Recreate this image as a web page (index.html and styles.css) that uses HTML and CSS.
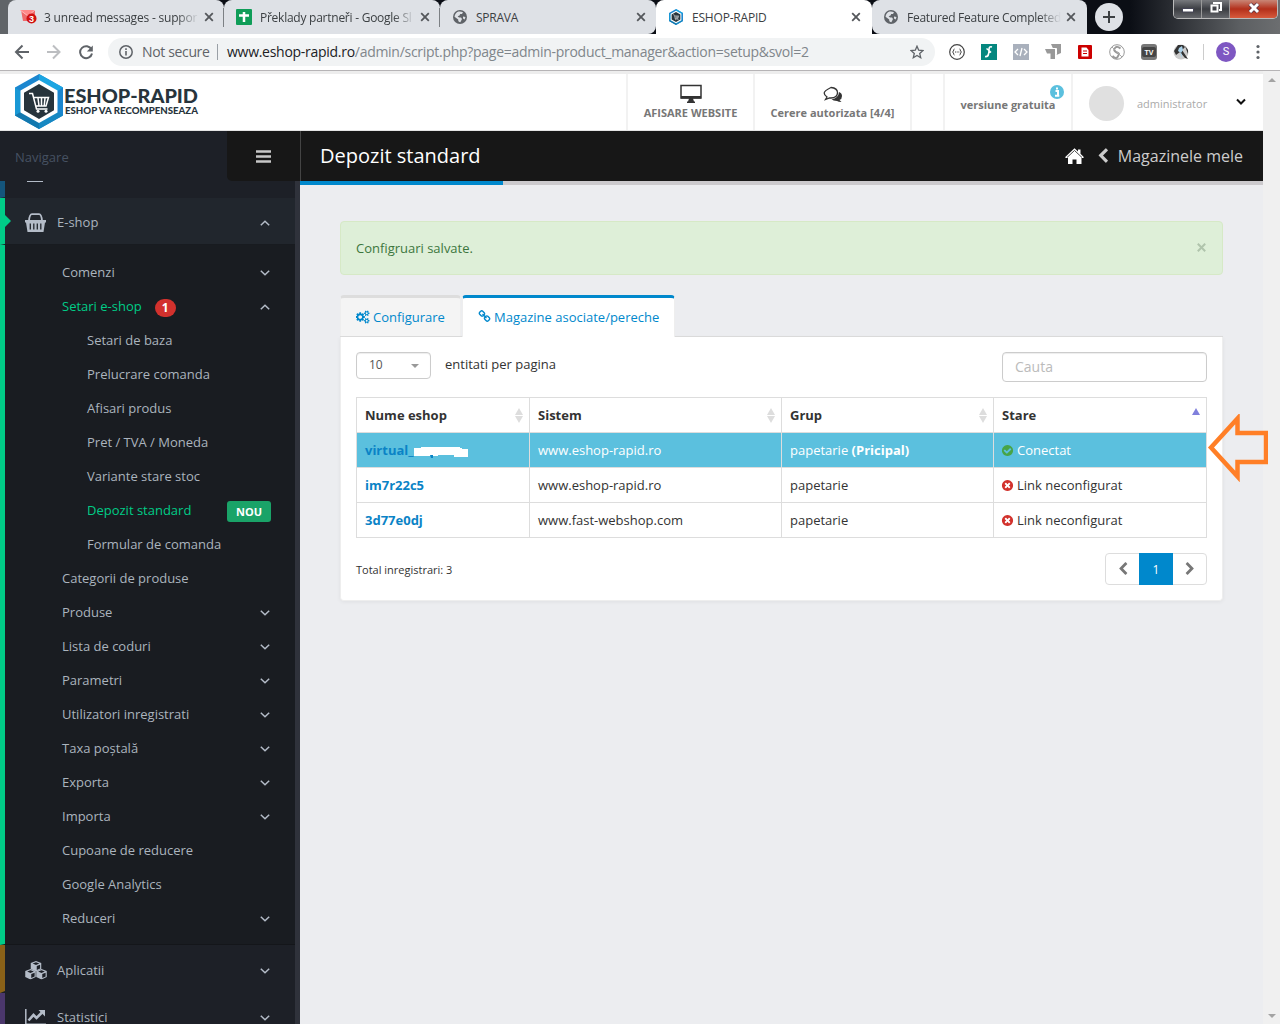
FILE: index.html
```html
<!doctype html>
<html lang="ro">

<head>
	<meta charset="UTF-8">
	<title>ESHOP-RAPID</title>
	<link rel="stylesheet" href="styles.css">
</head>

<body>
	<svg class="defs">
		<symbol id="close" viewBox="0 0 10 10"><path d="M1.2 1.2l7.6 7.6M8.8 1.2L1.2 8.8" stroke="#54575b" stroke-width="1.8" /></symbol>
		<symbol id="globe" viewBox="0 0 14 14"><circle cx="7" cy="7" r="7" fill="#5f6368" /><path d="M5.5 1.6Q8 1.2 10 2.3L9 4H7.2L6.5 5.5 4.6 6.2 6 7.5H8l1 1.4-1.6 3.3Q5 12 5.2 9.4L1.5 6.8Q2 3 5.500 1.600zM10 6.500l2.500.5-.8 2.500-1.700-1z" fill="#dee1e6" /></symbol>
		<symbol id="down" viewBox="0 0 10 6"><path d="M.8.8L5 4.800 9.200.8" fill="none" stroke="#b4bcc8" stroke-width="1.500" /></symbol>
		<symbol id="up" viewBox="0 0 10 6"><path d="M.8 5.200L5 1.200l4.200 4" fill="none" stroke="#b4bcc8" stroke-width="1.500" /></symbol>
		<symbol id="left" viewBox="0 0 1792 1792"><path d="M1427 301l-531 531 531 531q19 19 19 45t-19 45l-166 166q-19 19-45 19t-45-19l-742-742q-19-19-19-45t19-45l742-742q19-19 45-19t45 19l166 166q19 19 19 45t-19 45z" /></symbol>
		<symbol id="right" viewBox="0 0 1792 1792"><path d="M1363 877l-742 742q-19 19-45 19t-45-19l-166-166q-19-19-19-45t19-45l531-531-531-531q-19-19-19-45t19-45l166-166q19-19 45-19t45 19l742 742q19 19 19 45t-19 45z" /></symbol>
		<symbol id="check" viewBox="0 0 1792 1792"><path d="M1412 734q0-28-18-46l-91-90q-19-19-45-19t-45 19l-408 407-226-226q-19-19-45-19t-45 19l-91 90q-18 18-18 46 0 27 18 45l362 362q19 19 45 19 27 0 46-19l543-543q18-18 18-45zm252 162q0 209-103 385.5t-279.5 279.5-385.5 103-385.5-103-279.5-279.5-103-385.5 103-385.5 279.5-279.5 385.5-103 385.5 103 279.5 279.5 103 385.5z" /></symbol>
		<symbol id="times" viewBox="0 0 1792 1792"><path d="M1277 1122q0-26-19-45l-181-181 181-181q19-19 19-45 0-27-19-46l-90-90q-19-19-46-19-26 0-45 19l-181 181-181-181q-19-19-45-19-27 0-46 19l-90 90q-19 19-19 46 0 26 19 45l181 181-181 181q-19 19-19 45 0 27 19 46l90 90q19 19 46 19 26 0 45-19l181-181 181 181q19 19 45 19 27 0 46-19l90-90q19-19 19-46zm387-226q0 209-103 385.5t-279.5 279.5-385.5 103-385.5-103-279.5-279.5-103-385.5 103-385.5 279.5-279.5 385.5-103 385.5 103 279.5 279.5 103 385.5z" /></symbol>
		<symbol id="hex" viewBox="0 0 48 55">
			<path d="M24 0L0 13.500v28L24 55l24-13.500v-28z" fill="#1b86cf" />
			<path d="M24 0v8l17 10 7-4.500z" fill="#1ba5e2" /><path d="M0 13.500L7 18v20l-7 3.500z" fill="#1998d5" /><path d="M0 41.500L24 55v-8L7 37z" fill="#1278ae" /><path d="M48 41.500L24 55v-8l17-10z" fill="#1688c2" />
			<path d="M24 6L5.500 16.500v22L24 49l18.500-10.500v-22z" fill="#fff" />
			<path d="M24 10L9 18.800v17.400L24 45l15-8.800V18.800z" fill="#27343c" />
			<path d="M14 19.500h3.500l4 15.500h11M18.500 23.500h15L31 32H20.500M23 24l1 8M26.500 24v8M30 24l-.8 8" fill="none" stroke="#fff" stroke-width="1.500" />
			<circle cx="23" cy="37.300" r="1.500" fill="#fff" /><circle cx="31" cy="37.300" r="1.500" fill="#fff" />
		</symbol>
		<symbol id="cube" viewBox="0 0 12 11"><path d="M6 0l5.500 2v6.500L6 11 .5 8.500V2z" fill="#b4bcc8" /><path d="M2.500 2.700L6 1.400l3.500 1.300L6 4.100zM6.800 5.300l3.500-1.400v3.900l-3.500 1.600z" fill="#1d2027" /></symbol>
	</svg>

	<div class="tabstrip">
		<div class="tab first">
			<svg class="fav" width="18" height="14" viewBox="0 0 18 14"><path d="M1 0h14v11H3z" fill="#ee6a6a" /><path d="M0 0l8 6 7-6" fill="#f88" stroke="#fbb" /><circle cx="11.500" cy="8.500" r="5" fill="#d01010" /><text x="11.500" y="12" text-anchor="middle" class="favnum">3</text></svg>
			<span class="tabname t1">3 unread messages - suppor</span><svg class="x"><use href="#close" /></svg>
		</div>
		<div class="tab">
			<svg class="fav" width="16" height="16"><rect width="16" height="16" rx="1" fill="#0f9d58" /><path d="M3 6.500h10M8 3v10" stroke="#fff" stroke-width="2.500" /></svg>
			<span class="tabname t2">Překlady partneři - Google Sl</span><svg class="x"><use href="#close" /></svg>
		</div>
		<div class="tab last">
			<svg class="fav" width="14" height="14"><use href="#globe" /></svg>
			<span class="tabname t3">SPRAVA</span><svg class="x"><use href="#close" /></svg>
		</div>
		<div class="tab active">
			<svg class="fav" width="16" height="16"><use href="#hex" /></svg>
			<span class="tabname t4">ESHOP-RAPID</span><svg class="x"><use href="#close" /></svg>
		</div>
		<div class="tab solo">
			<svg class="fav" width="14" height="14"><use href="#globe" /></svg>
			<span class="tabname t5">Featured Feature Completed</span><svg class="x"><use href="#close" /></svg>
		</div>
		<div class="plus"><svg width="12" height="12"><path d="M6 0v12M0 6h12" stroke="#3c4043" stroke-width="2" /></svg></div>
		<div class="controls">
			<span class="ctl"><svg width="12" height="14"><rect x=".5" y="8.500" width="11" height="3.500" fill="#fff" stroke="#445" /></svg></span>
			<span class="ctl"><svg width="12" height="14"><path d="M4 4V3h7v7H9M1.500 5.500h6v6h-6z" fill="none" stroke="#fff" stroke-width="2" /></svg></span>
			<span class="ctl red"><svg width="12" height="14"><path d="M2 4l8 8M10 4l-8 8" stroke="#534" stroke-width="4.500" /><path d="M2 4l8 8M10 4l-8 8" stroke="#fff" stroke-width="3" /></svg></span>
		</div>
	</div>

	<div class="toolbar">
		<svg class="navicons" width="80" height="16" fill="none" stroke-width="2"><path d="M15 8H2.500M8.500 1.500L2 8l6.500 6.500" stroke="#5f6368" /><path d="M33 8h12.500M39 1.500L45.500 8 39 14.500" stroke="#bcbec1" /><path d="M77.500 5.500A6 6 0 1 0 78 9.500" stroke="#5f6368" /><path d="M78.800 1.500v6h-6z" fill="#5f6368" stroke="none" /></svg>
		<div class="omnibox">
			<svg width="14" height="14"><circle cx="7" cy="7" r="6.200" fill="none" stroke="#5f6368" stroke-width="1.500" /><path d="M7 6v4.500M7 3.300v1.700" stroke="#5f6368" stroke-width="1.600" /></svg>
			<span class="notsecure">Not secure</span>
			<span class="url"><b>www.eshop-rapid.ro</b>/admin/script.php?page=admin-product_manager&amp;action=setup&amp;svol=2</span>
			<svg class="star" width="14" height="14" viewBox="0 0 14 14"><path d="M7 1.200l1.700 4 4.300.4-3.300 2.900 1 4.200L7 10.500l-3.700 2.200 1-4.200L1 5.600l4.300-.4z" fill="none" stroke="#5f6368" stroke-width="1.300" /></svg>
		</div>
		<div class="exts">
			<svg width="16" height="16"><circle cx="8" cy="8" r="7.300" fill="none" stroke="#444" stroke-width="1.200" /><path d="M5.500 5Q4.500 5 4.500 7L3.500 8l1 1q0 2 1 2M10.500 5q1 0 1 2l1 1-1 1q0 2-1 2M6 8h1M7.700 8h1M9.300 8h1" fill="none" stroke="#444" /></svg>
			<svg width="16" height="16"><rect width="16" height="16" fill="#04877f" /><path d="M11 3Q8 2 8 5.500T7.500 10Q7 13 4 12.500M5.500 4.500L8 6.500 10 8.500" fill="none" stroke="#fff" stroke-width="1.600" /></svg>
			<svg width="16" height="16"><rect width="16" height="16" fill="#a9b0bc" /><path d="M5 5L2 8l3 3M11 5l3 3-3 3M9 4l-2 8" fill="none" stroke="#fff" stroke-width="1.300" /></svg>
			<svg width="16" height="16" fill="#999"><path d="M6 0h10v9l-4.500 2V4.500H8zM0 5h10v10H5.500V9.500H2z" /><path d="M5.500 4.500h6v6" fill="none" stroke="#fff" /></svg>
			<svg width="16" height="16"><rect x="1" y="1" width="14" height="14" rx="1" fill="#c00" /><path d="M4.500 3.500h5L11.500 6v6.500h-7z" fill="#fff" /><path d="M6 7h4M6 9.500h4" stroke="#c00" /></svg>
			<svg width="16" height="16" fill="none" stroke="#999"><circle cx="8" cy="8" r="7.300" /><path d="M11.500 4.500Q8 1.500 6 4t1 4 3 2-1.500 3-5-1" stroke-width="2" /><path d="M3 3l10 10" stroke="#aaa" /></svg>
			<svg width="16" height="16"><rect width="16" height="16" rx="3" fill="#777" /><rect x="1" y="3" width="14" height="10" rx="2" fill="#454545" /><text x="8" y="10.500" text-anchor="middle" class="tvtext">TV</text></svg>
			<svg width="16" height="16"><circle cx="8" cy="8" r="7.500" fill="#ccc" /><path d="M1 7L5 1h5l2 2-3 3 6 9-3-1-5-6-4 3zM12 2l3 4v4z" fill="#333" /><path d="M6 4l3-2 1 4-2 3-3-2zM7 9l2 1v4z" fill="#a9d0e8" /></svg>
		</div>
		<div class="avatar">S</div>
		<svg class="dots" width="4" height="16" fill="#5f6368"><circle cx="2" cy="2.500" r="1.600" /><circle cx="2" cy="8" r="1.600" /><circle cx="2" cy="13.500" r="1.600" /></svg>
	</div>

	<div class="viewport">
		<div class="page">
			<header class="header">
				<svg class="logo" width="190" height="56">
					<use href="#hex" width="48" height="55" />
					<text x="49" y="29" class="logo1" textLength="134" lengthAdjust="spacingAndGlyphs">ESHOP-RAPID</text>
					<text x="50" y="40" class="logo2" textLength="133" lengthAdjust="spacingAndGlyphs">ESHOP VA RECOMPENSEAZA</text>
				</svg>
				<div class="hcell website">
					<svg width="22" height="19"><path d="M1 1.500h20v12.500H1z" fill="none" stroke="#333" stroke-width="1.500" /><path d="M1 12h20v2.500H13l1 3h1V19H7v-1.500h1l1-3H1z" fill="#333" /></svg>
					<span class="w1">AFISARE WEBSITE</span>
				</div>
				<div class="hcell cerere">
					<svg width="20" height="17"><path d="M19 10q0 3-2.500 4l2 2q-3 0-4.500-1-4 0-5.500-2 7-.5 7.500-7 3 1 3 4z" fill="#333" /><path d="M8 1.500q6.500.5 6.500 5.300T8 12H6.500L2.500 13.500 4 11Q1.200 9.300 1.200 7T8 1.500z" fill="#fff" stroke="#333" stroke-width="1.300" /></svg>
					<span class="w2">Cerere autorizata [4/4]</span>
				</div>
				<div class="hcell blank"></div>
				<div class="hcell versiune"><span class="w3">versiune gratuita</span>
					<svg class="info" width="14" height="14"><circle cx="7" cy="7" r="7" fill="#5bc0de" /><path d="M5.500 6H8v4.500M5 10.700h4.300M7 2.500v2" stroke="#fff" stroke-width="2" fill="none" /></svg>
				</div>
				<div class="hcell user"><i class="face"></i><span class="w4">administrator</span>
					<svg width="10" height="7"><path d="M1 1.500l4 4 4-4" fill="none" stroke="#111" stroke-width="2" /></svg>
				</div>
			</header>

			<div class="body">
				<aside class="sidebar">
					<div class="navhead"><span>Navigare</span>
						<div class="burger"><svg width="15" height="13"><path d="M0 1.500h15M0 6.500h15M0 11.500h15" stroke="#c8c8c8" stroke-width="2.400" /></svg></div>
					</div>
					<div class="menu">
						<div class="cut"><i></i></div>
						<div class="top open">
							<svg width="21" height="19" viewBox="0 0 21 19"><path d="M4 8Q4.500 1.200 7 1.200h7q2.500 0 3 6.800" fill="none" stroke="#b4bcc8" stroke-width="1.800" /><path d="M0 7h21v2.500h-1L18.500 19h-16L1 9.500H0z" fill="#b4bcc8" /><path d="M5.300 10.500v6M8.800 10.500v6M12.300 10.500v6M15.800 10.500v6" stroke="#21262d" stroke-width="1.300" /></svg>
							<span>E-shop</span><svg class="chev"><use href="#up" /></svg>
						</div>
						<div class="sub">
							<div class="item"><span>Comenzi</span><svg class="chev"><use href="#down" /></svg></div>
							<div class="item on"><span>Setari e-shop</span><b class="count">1</b><svg class="chev"><use href="#up" /></svg></div>
							<div class="item deep"><span>Setari de baza</span></div>
							<div class="item deep"><span>Prelucrare comanda</span></div>
							<div class="item deep"><span>Afisari produs</span></div>
							<div class="item deep"><span>Pret / TVA / Moneda</span></div>
							<div class="item deep"><span>Variante stare stoc</span></div>
							<div class="item deep on"><span>Depozit standard</span><b class="nou">NOU</b></div>
							<div class="item deep"><span>Formular de comanda</span></div>
							<div class="item"><span>Categorii de produse</span></div>
							<div class="item"><span>Produse</span><svg class="chev"><use href="#down" /></svg></div>
							<div class="item"><span>Lista de coduri</span><svg class="chev"><use href="#down" /></svg></div>
							<div class="item"><span>Parametri</span><svg class="chev"><use href="#down" /></svg></div>
							<div class="item"><span>Utilizatori inregistrati</span><svg class="chev"><use href="#down" /></svg></div>
							<div class="item"><span>Taxa poştală</span><svg class="chev"><use href="#down" /></svg></div>
							<div class="item"><span>Exporta</span><svg class="chev"><use href="#down" /></svg></div>
							<div class="item"><span>Importa</span><svg class="chev"><use href="#down" /></svg></div>
							<div class="item"><span>Cupoane de reducere</span></div>
							<div class="item"><span>Google Analytics</span></div>
							<div class="item"><span>Reduceri</span><svg class="chev"><use href="#down" /></svg></div>
						</div>
						<div class="top brown">
							<svg width="22" height="19"><use href="#cube" x="5" width="12" height="10.500" /><use href="#cube" x="-.5" y="8" width="12" height="10.500" /><use href="#cube" x="10.500" y="8" width="12" height="10.500" /></svg>
							<span>Aplicatii</span><svg class="chev"><use href="#down" /></svg>
						</div>
						<div class="top purple">
							<svg width="21" height="16" viewBox="0 0 21 16"><path d="M.8 0v15.200H21" fill="none" stroke="#b4bcc8" stroke-width="1.500" /><path d="M3.500 11.500L8.500 6l3 3L17 3.500" fill="none" stroke="#b4bcc8" stroke-width="2.600" /><path d="M13.500 1H20v6.500z" fill="#b4bcc8" /></svg>
							<span>Statistici</span><svg class="chev"><use href="#down" /></svg>
						</div>
					</div>
				</aside>

				<main class="main">
					<div class="titlebar">
						<h1>Depozit standard</h1>
						<svg width="19" height="16"><path d="M9.500.3l3.500 3.300V1.500h2.500v4.300L19 9.200l-1 .9h-1.500V16H11.500v-4.500H7.500V16H3v-5.900H1L0 9.200z" fill="#fff" /><path d="M2 9.500l7.500-7 7.500 7" stroke="#171717" stroke-width=".8" fill="none" /></svg>
						<svg class="back" width="16" height="16"><use href="#left" /></svg>
						<span class="mele">Magazinele mele</span>
					</div>
					<div class="progress"><i></i></div>

					<div class="content">
						<div class="alert"><span>Configruari salvate.</span><svg width="9" height="9"><path d="M.8.8l7.400 7.400M8.200.8L.8 8.200" stroke="#b0c4ac" stroke-width="2" /></svg></div>

						<div class="tabs">
							<a class="ptab">
								<svg width="14" height="14" viewBox="0 0 1920 1792"><path d="M832 896q0-106-75-181t-181-75-181 75-75 181 75 181 181 75 181-75 75-181zm768 512q0-52-38-90t-90-38-90 38-38 90q0 53 37.500 90.500t90.500 37.500 90.500-37.500 37.500-90.500zm0-1024q0-52-38-90t-90-38-90 38-38 90q0 53 37.500 90.500t90.500 37.500 90.500-37.500 37.500-90.500zm-384 421v185q0 10-7 19.500t-16 10.500l-155 24q-11 35-32 76 34 48 90 115 7 11 7 20 0 12-7 19-23 30-82.500 89.500t-78.500 59.500q-11 0-21-7l-115-90q-37 19-77 31-11 108-23 155-7 24-30 24h-186q-11 0-20-7.500t-10-17.500l-23-153q-34-10-75-31l-118 89q-7 7-20 7-11 0-21-8-144-133-144-160 0-9 7-19 10-14 41-53t47-61q-23-44-35-82l-152-24q-10-1-17-9.500t-7-19.500v-185q0-10 7-19.500t16-10.500l155-24q11-35 32-76-34-48-90-115-7-11-7-20 0-12 7-20 22-30 82-89t79-59q11 0 21 7l115 90q34-18 77-32 11-108 23-154 7-24 30-24h186q11 0 20 7.500t10 17.500l23 153q34 10 75 31l118-89q8-7 20-7 11 0 21 8 144 133 144 160 0 8-7 19-12 16-42 54t-45 60q23 48 34 82l152 23q10 2 17 10.500t7 19.500zm640 533v140q0 16-149 31-12 27-30 52 51 113 51 138 0 4-4 7-122 71-124 71-8 0-46-47t-52-68q-20 2-30 2t-30-2q-14 21-52 68t-46 47q-2 0-124-71-4-3-4-7 0-25 51-138-18-25-30-52-149-15-149-31v-140q0-16 149-31 13-29 30-52-51-113-51-138 0-4 4-7 4-2 35-20t59-34 30-16q8 0 46 46.500t52 67.500q20-2 30-2t30 2q51-71 92-112l6-2q4 0 124 70 4 3 4 7 0 25-51 138 17 23 30 52 149 15 149 31zm0-1024v140q0 16-149 31-12 27-30 52 51 113 51 138 0 4-4 7-122 71-124 71-8 0-46-47t-52-68q-20 2-30 2t-30-2q-14 21-52 68t-46 47q-2 0-124-71-4-3-4-7 0-25 51-138-18-25-30-52-149-15-149-31v-140q0-16 149-31 13-29 30-52-51-113-51-138 0-4 4-7 4-2 35-20t59-34 30-16q8 0 46 46.500t52 67.500q20-2 30-2t30 2q51-71 92-112l6-2q4 0 124 70 4 3 4 7 0 25-51 138 17 23 30 52 149 15 149 31z" /></svg>
								<span>Configurare</span></a>
							<a class="ptab current">
								<svg width="13" height="13" viewBox="0 0 1792 1792"><path d="M1520 1216q0-40-28-68l-208-208q-28-28-68-28-42 0-72 32 3 3 19 18.500t21.500 21.500 15 19 13 25.500 3.500 27.500q0 40-28 68t-68 28q-15 0-27.500-3.500t-25.500-13-19-15-21.500-21.500-18.500-19q-33 31-33 73 0 40 28 68l206 207q27 27 68 27 40 0 68-26l147-146q28-28 28-67zm-703-705q0-40-28-68l-206-207q-28-28-68-28-39 0-68 27l-147 146q-28 28-28 67 0 40 28 68l208 208q27 27 68 27 42 0 72-31-3-3-19-18.500t-21.500-21.500-15-19-13-25.500-3.500-27.500q0-40 28-68t68-28q15 0 27.500 3.500t25.500 13 19 15 21.500 21.500 18.500 19q33-31 33-73zm895 705q0 120-85 203l-147 146q-83 83-203 83-121 0-204-85l-206-207q-83-83-83-203 0-123 88-209l-88-88q-86 88-208 88-120 0-204-84l-208-208q-84-84-84-204t85-203l147-146q83-83 203-83 121 0 204 85l206 207q83 83 83 203 0 123-88 209l88 88q86-88 208-88 120 0 204 84l208 208q84 84 84 204z" /></svg>
								<span>Magazine asociate/pereche</span></a>
						</div>
						<div class="panel">
							<div class="filters">
								<div class="length"><span>10</span><i></i></div>
								<span class="entitati">entitati per pagina</span>
								<input class="search" type="text" placeholder="Cauta">
							</div>
							<table>
								<colgroup><col class="c1"><col class="c2"><col class="c3"><col></colgroup>
								<tr>
									<th>Nume eshop<i class="sort"></i></th>
									<th>Sistem<i class="sort"></i></th>
									<th>Grup<i class="sort"></i></th>
									<th>Stare<i class="sort asc"></i></th>
								</tr>
								<tr class="sel">
									<td><a>virtual_</a><svg class="smudge" width="55" height="12"><path d="M0 2h7V1h39v1h2v1h6v8H40V9H24v1H0z" fill="#fff" /><path d="M16 9h3v3h-2z" fill="#0a83c6" /></svg></td>
									<td>www.eshop-rapid.ro</td>
									<td>papetarie <b>(Pricipal)</b></td>
									<td><svg class="st ok"><use href="#check" /></svg>Conectat</td>
								</tr>
								<tr>
									<td><a>im7r22c5</a></td>
									<td>www.eshop-rapid.ro</td>
									<td>papetarie</td>
									<td><svg class="st"><use href="#times" /></svg>Link neconfigurat</td>
								</tr>
								<tr>
									<td><a>3d77e0dj</a></td>
									<td>www.fast-webshop.com</td>
									<td>papetarie</td>
									<td><svg class="st"><use href="#times" /></svg>Link neconfigurat</td>
								</tr>
							</table>
							<div class="foot">
								<span>Total inregistrari: 3</span>
								<div class="pager"><a><svg width="14" height="14"><use href="#left" /></svg></a><a class="now">1</a><a><svg width="14" height="14"><use href="#right" /></svg></a></div>
							</div>
						</div>
					</div>
				</main>
			</div>
		</div>
		<div class="scrollbar"><i class="sup"></i><i class="sdown"></i></div>
	</div>

	<svg class="arrow" width="62" height="68"><path d="M5 33.500L31.500 4.500V19H60v29H31.500v14.500z" fill="none" stroke="#ff7f27" stroke-width="4.500" /></svg>
</body>

</html>
```
FILE: styles.css
```css
* {
	box-sizing: border-box;
}

body {
	margin: 0;
	width: 1280px;
	height: 1024px;
	overflow: hidden;
	display: flex;
	flex-direction: column;
	position: relative;
	font: 13px "Open Sans", sans-serif;
	color: #333;
	background: #ecedf0;
}

svg {
	display: block;
	flex: none;
}

.defs {
	position: absolute;
	width: 0;
	height: 0;
}

span, h1, a, b {
	white-space: nowrap;
}

/* browser window */
.tabstrip {
	height: 34px;
	flex: none;
	display: flex;
	padding-left: 8px;
	background: linear-gradient(90deg, #606468 0, #606468 20px, #0b0e15 120px, #0b0e15 1130px, #5c5f62 1240px, #6c6e70);
}

.tab {
	width: 216px;
	height: 34px;
	background: #dee1e6;
	border-radius: 8px 8px 0 0;
	display: flex;
	align-items: center;
	padding: 0 10px 0 12px;
	position: relative;
	font-size: 12px;
	color: #3c4043;
}

.tab.last {
	border-bottom-right-radius: 8px;
	padding-left: 13px;
}

.tab.solo {
	width: 215px;
	border-bottom-left-radius: 8px;
	padding-right: 11px;
}

.tab.first::after,
.tab:nth-child(2)::after {
	content: "";
	position: absolute;
	right: 0;
	top: 8px;
	width: 1px;
	height: 19px;
	background: #7c8084;
}

.tab.active {
	background: #fff;
	padding-right: 11px;
}

.tabname {
	flex: 1;
	margin-left: 8px;
	overflow: hidden;
}

.t1, .t2, .t5 {
	-webkit-mask-image: linear-gradient(90deg, #000 86%, transparent);
	mask-image: linear-gradient(90deg, #000 86%, transparent);
}

.t1 { margin-left: 6px; letter-spacing: -0.2px; }
.t2 { letter-spacing: -0.25px; }
.t3 { margin-left: 9px; letter-spacing: -0.25px; }
.t4 { letter-spacing: -0.2px; }
.t5 { margin-left: 9px; letter-spacing: -0.25px; }

.x {
	width: 10px;
	height: 10px;
	margin-left: 5px;
}

.favnum {
	font: bold 9px "Liberation Sans", sans-serif;
	fill: #fff;
}

.plus {
	width: 28px;
	height: 28px;
	border-radius: 50%;
	background: #dee1e6;
	margin: 3px 0 0 8px;
	display: flex;
	align-items: center;
	justify-content: center;
}

.controls {
	display: flex;
	margin-left: auto;
	margin-right: 2px;
	height: 19px;
	border: 1px solid #bbb;
	border-top: 0;
	border-radius: 0 0 5px 5px;
	overflow: hidden;
}

.ctl {
	width: 28px;
	display: flex;
	justify-content: center;
	background: linear-gradient(#77797d, #3b3d42 50%, #65676b);
	border-right: 1px solid #999;
}

.ctl.red {
	width: 47px;
	border: 0;
	background: linear-gradient(#c98676, #b3301b 50%, #d75a3c);
}

.toolbar {
	height: 37px;
	flex: none;
	display: flex;
	align-items: center;
	padding: 0 20px 1px 14px;
	background: #fff;
	border-bottom: 1px solid #b6b4b6;
}

.omnibox {
	width: 827px;
	height: 28px;
	margin-left: 14px;
	border-radius: 14px;
	background: #f1f3f4;
	display: flex;
	align-items: center;
	padding: 0 11px;
	font-size: 14px;
	color: #80868b;
}

.notsecure {
	width: 76px;
	height: 16px;
	line-height: 15px;
	margin-left: 9px;
	color: #5f6368;
	border-right: 1px solid #9aa0a6;
	letter-spacing: -0.35px;
}

.url {
	margin-left: 9px;
	letter-spacing: -0.28px;
}

.url b {
	font-weight: normal;
	color: #202124;
}

.star {
	margin-left: auto;
}

.exts {
	display: flex;
	gap: 16px;
	margin-left: 14px;
	padding-right: 14px;
	border-right: 1px solid #ccc;
}

.tvtext {
	font: bold 7px "Liberation Sans", sans-serif;
	fill: #fff;
}

.avatar {
	width: 20px;
	height: 20px;
	border-radius: 50%;
	background: #7e57c2;
	color: #fff;
	font: 11px/20px Roboto, sans-serif;
	text-align: center;
	margin-left: 12px;
}

.dots {
	margin-left: auto;
}

/* shop header */
.viewport {
	flex: 1;
	display: flex;
	min-height: 0;
}

.page {
	width: 1263px;
	display: flex;
	flex-direction: column;
}

.header {
	height: 60px;
	flex: none;
	display: flex;
	background: #fff;
	border-top: 3px solid #ededed;
	border-bottom: 1px solid #e4e4e4;
}

.logo {
	margin: 0 auto 0 15px;
}

.logo1 {
	font: 900 18px Lato, sans-serif;
	fill: #27343c;
}

.logo2 {
	font: 900 9.5px Lato, sans-serif;
	fill: #27343c;
}

.hcell {
	border-left: 2px solid #f2f2f2;
	font-size: 11px;
	font-weight: bold;
	color: #777;
	display: flex;
	flex-direction: column;
	align-items: center;
	position: relative;
}

.website {
	width: 127px;
	padding-top: 10px;
}

.cerere {
	width: 157px;
	padding-top: 12px;
}

.website span,
.cerere span {
	margin-top: 2px;
}

.website span {
	letter-spacing: 0;
}

.blank {
	width: 33px;
}

.versiune {
	width: 128px;
	padding-top: 23px;
}

.info {
	position: absolute;
	right: 7px;
	top: 11px;
}

.user {
	width: 192px;
	flex-direction: row;
	padding: 0 17px 3px 16px;
	font-weight: normal;
	color: #aaa;
}

.face {
	width: 35px;
	height: 35px;
	border-radius: 50%;
	background: #e0e0e0;
	margin: 5px 13px 0 0;
}

.user span {
	margin-top: 5px;
}

.user svg {
	margin: 2px 0 0 auto;
}

/* sidebar */
.body {
	flex: 1;
	display: flex;
	min-height: 0;
}

.sidebar {
	width: 300px;
	background: #1d2027;
	overflow: hidden;
}

.navhead {
	height: 50px;
	display: flex;
	align-items: center;
	justify-content: space-between;
	padding-left: 15px;
	color: #465162;
}

.navhead > span {
	margin-top: 1px;
}

.burger {
	width: 73px;
	height: 50px;
	background: #171717;
	border-radius: 0 0 0 5px;
	display: flex;
	align-items: center;
	justify-content: center;
}

.menu {
	border-right: 5px solid #2f323b;
	color: #abb4be;
}

.cut {
	height: 17px;
	border-left: 5px solid #14557c;
	padding-left: 22px;
	border-bottom: 1px solid #1d2027;
}

.cut i {
	display: block;
	width: 16px;
	height: 1px;
	background: #b4bcc8;
}

.top {
	height: 48px;
	border-left: 5px solid #8a6118;
	border-bottom: 2px solid #1d2027;
	display: flex;
	align-items: center;
	padding: 4px 25px 0 20px;
	position: relative;
}

.top span {
	margin-left: 11px;
}

.top.brown span {
	margin-left: 10px;
}

.top.purple {
	padding-top: 2px;
	border-left-color: #4b376c;
}

.top.open {
	height: 47px;
	padding-top: 2px;
	background: #21262d;
	border-left-color: #00cc87;
	border-bottom: 1px solid #181b20;
}

.top.open::before {
	content: "";
	position: absolute;
	left: 0;
	top: 17px;
	border: 6px solid transparent;
	border-left-color: #00cc87;
	border-right: 0;
}

.chev {
	width: 10px;
	height: 6px;
	margin-left: auto;
	position: relative;
	top: 1px;
}

.sub {
	height: 700px;
	padding: 10px 0 9px;
	background: #191c21;
	border-left: 5px solid #00cc87;
	border-bottom: 1px solid #14161a;
}

.item {
	height: 34px;
	display: flex;
	align-items: center;
	padding: 0 25px 0 57px;
}

.item.deep {
	padding-left: 82px;
	padding-right: 24px;
}

.on span {
	color: #00cc87;
}

.count {
	width: 21px;
	height: 18px;
	margin: 3px 0 0 13px;
	border-radius: 9px;
	background: #d2312d;
	color: #fff;
	font-size: 12px;
	line-height: 17px;
	text-align: center;
}

.nou {
	width: 44px;
	height: 21px;
	margin: 2px 0 0 auto;
	border-radius: 3px;
	background: #1aa368;
	color: #fff;
	font-size: 11px;
	line-height: 21px;
	text-align: center;
}

/* content */
.main {
	flex: 1;
}

.titlebar {
	height: 50px;
	background: #171717;
	border-left: 1px solid #444;
	display: flex;
	align-items: center;
	padding: 0 20px 0 19px;
	color: #ccc;
	font-size: 16px;
}

.titlebar h1 {
	margin: 0 auto 1px 0;
	font-size: 20px;
	font-weight: normal;
	color: #fff;
}

.back {
	fill: #ccc;
	margin: 0 7px 0 11px;
}

.progress {
	height: 4px;
	background: #cccacd;
}

.progress i {
	display: block;
	width: 203px;
	height: 4px;
	background: #0088cc;
}

.content {
	padding: 36px 40px;
}

.alert {
	height: 54px;
	border: 1px solid #d6e9c6;
	border-radius: 4px;
	background: #deefd8;
	color: #3c763d;
	display: flex;
	align-items: center;
	justify-content: space-between;
	padding: 0 16px 0 15px;
}

.alert svg {
	margin-bottom: 2px;
}

.tabs {
	display: flex;
	margin-top: 20px;
	height: 42px;
	border-bottom: 1px solid #ddd;
}

.ptab {
	height: 41px;
	width: 121px;
	margin-right: 1px;
	padding: 0 0 1px 15px;
	display: flex;
	align-items: center;
	gap: 3px;
	color: #0088cc;
	fill: #0088cc;
	border: solid #eee;
	border-width: 3px 1px 0;
	border-top-color: #ddd;
	border-radius: 4px 4px 0 0;
	background: #f4f4f4;
}

.ptab.current {
	width: 213px;
	height: 42px;
	padding-bottom: 2px;
	background: #fff;
	border-top-color: #0088cc;
}

.panel {
	height: 264px;
	padding: 15px 15px 0;
	background: #fff;
	border: 1px solid #eee;
	border-top: 0;
	border-radius: 0 0 4px 4px;
	box-shadow: 0 1px 4px rgba(0, 0, 0, 0.06);
}

.filters {
	height: 45px;
	display: flex;
	align-items: flex-start;
}

.length {
	width: 75px;
	height: 27px;
	border: 1px solid #ccc;
	border-radius: 4px;
	display: flex;
	align-items: center;
	justify-content: space-between;
	padding: 0 11px 2px 12px;
	font-size: 12px;
	color: #555;
	box-shadow: inset 0 1px 1px rgba(0, 0, 0, 0.075);
}

.length i {
	border: 4px solid transparent;
	border-top-color: #999;
	border-bottom: 0;
	margin-top: 3px;
}

.entitati {
	margin: 3px 0 0 14px;
}

.search {
	width: 205px;
	height: 30px;
	margin-left: auto;
	border: 1px solid #ccc;
	border-radius: 4px;
	padding: 0 12px 2px;
	font: 14px "Open Sans", sans-serif;
	box-shadow: inset 0 1px 1px rgba(0, 0, 0, 0.075);
}

.search::placeholder {
	color: #bbb;
}

table {
	width: 851px;
	table-layout: fixed;
	border-collapse: collapse;
}

.c1 { width: 173px; }
.c2 { width: 252px; }
.c3 { width: 212px; }

th, td {
	height: 35px;
	padding: 0 8px;
	border: 1px solid #ddd;
	text-align: left;
	position: relative;
}

td a {
	color: #0a83c6;
	font-weight: bold;
}

.sort {
	position: absolute;
	right: 6px;
	top: 10px;
	width: 8px;
	height: 15px;
}

.sort::before,
.sort::after {
	content: "";
	position: absolute;
	left: 0;
	top: 0;
	border: 4px solid transparent;
	border-top-width: 0;
	border-bottom: 7px solid #ddd;
}

.sort::after {
	top: 8px;
	border-top: 7px solid #ddd;
	border-bottom-width: 0;
}

.sort.asc::before {
	border-bottom-color: #8080dc;
}

.sort.asc::after {
	display: none;
}

.sel td {
	background: #5bc0de;
	color: #fff;
}

.smudge {
	position: absolute;
	left: 57px;
	top: 13px;
}

.st {
	display: inline-block;
	width: 13px;
	height: 13px;
	margin: 0 3px 0 -1px;
	vertical-align: -2px;
	fill: #d2322d;
}

.st.ok {
	fill: #47a447;
}

.foot {
	display: flex;
	justify-content: space-between;
	align-items: center;
	margin-top: 15px;
	font-size: 11px;
}

.foot > span {
	margin-top: 1px;
}

.pager {
	display: flex;
	width: 102px;
	height: 32px;
	border: 1px solid #ddd;
	border-radius: 4px;
	fill: #777;
}

.pager a {
	flex: 1;
	display: flex;
	align-items: center;
	justify-content: center;
}

.pager .now {
	flex: none;
	width: 34px;
	margin: -1px 0;
	background: #0088cc;
	color: #fff;
	font-size: 12px;
}

.scrollbar {
	width: 17px;
	background: #f0f0f0;
	display: flex;
	flex-direction: column;
	justify-content: space-between;
	align-items: center;
	padding: 7px 0 6px;
}

.sup, .sdown {
	border: 4px solid transparent;
	border-top: 0;
	border-bottom-color: #a3a3a3;
}

.sdown {
	border-top: 4px solid #a3a3a3;
	border-bottom: 0;
}

/* hand drawn pointer over the selected row */
.arrow {
	position: absolute;
	left: 1206px;
	top: 414px;
}
```
